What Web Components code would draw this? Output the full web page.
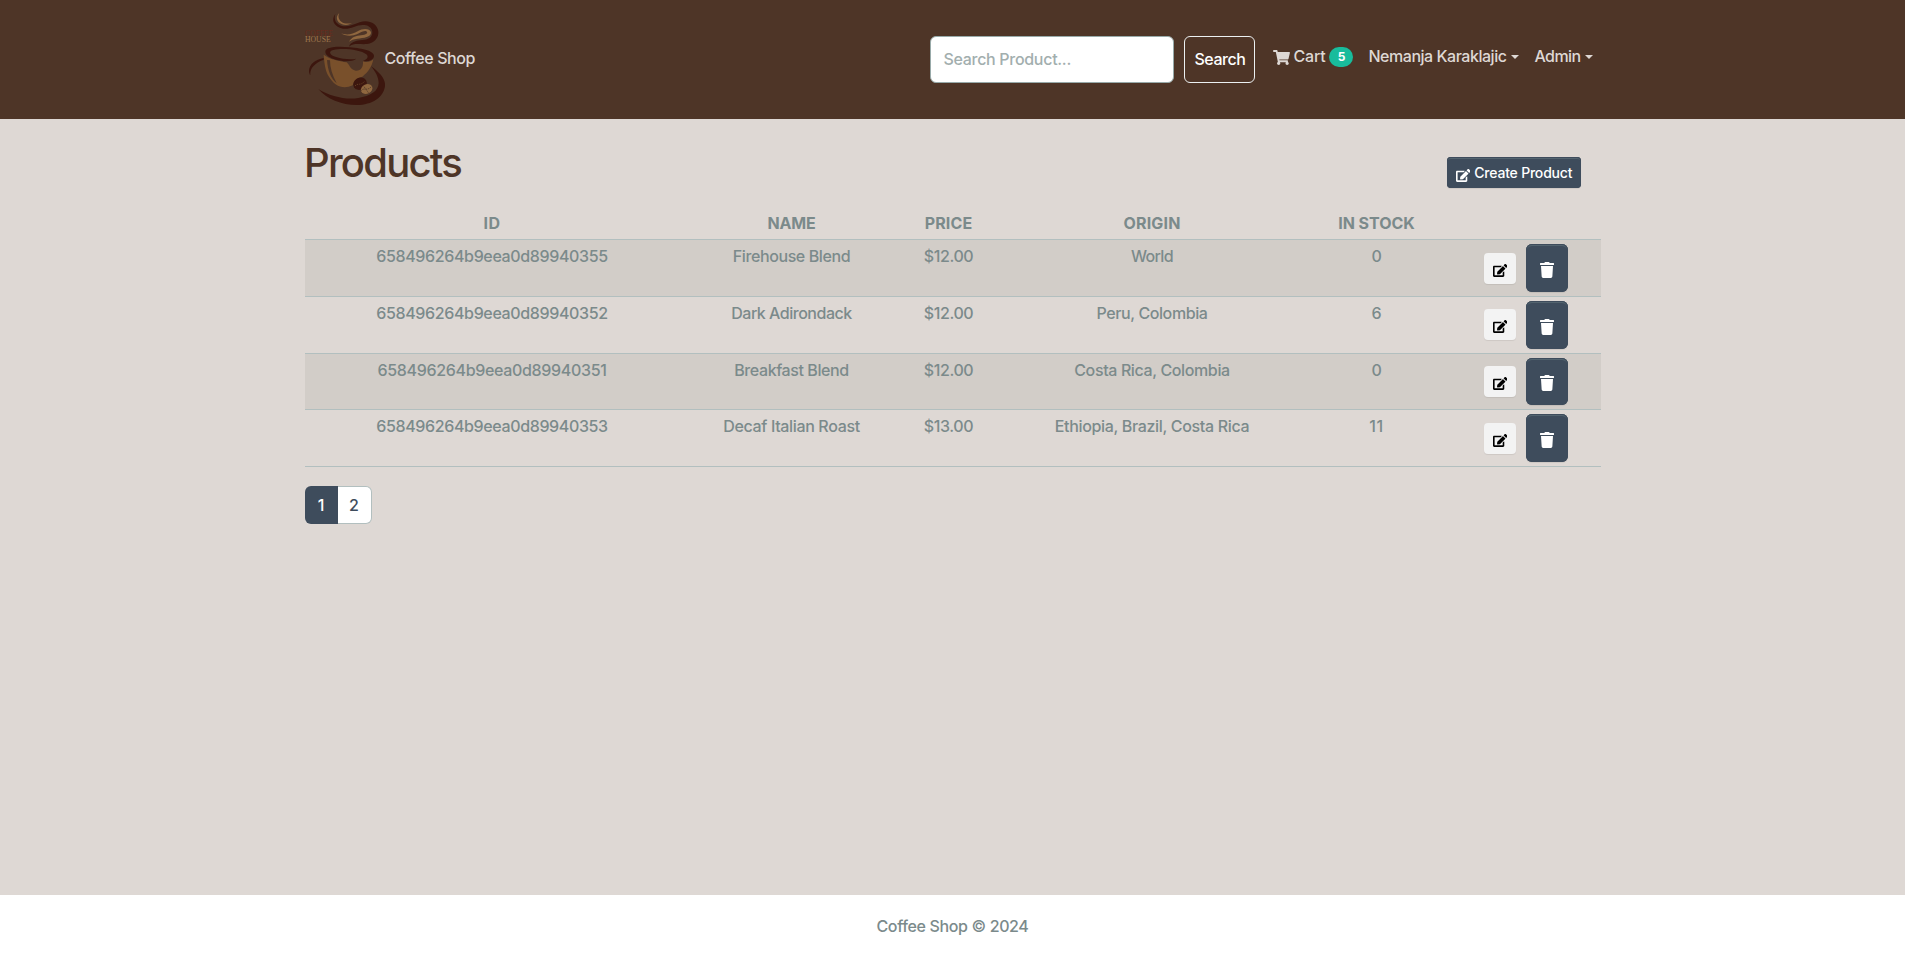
<!DOCTYPE html>
<html lang="en">
<head>
<meta charset="utf-8">
<title>Coffee Shop</title>
<style>
html,body{margin:0;height:100%}
body{font:450 16px/24px Inter,"Liberation Sans",sans-serif;color:#7b8a8b;background:#ded8d4}
</style>
</head>
<body>
<shop-app></shop-app>
<script>
const define=(name,html,init)=>customElements.define(name,class extends HTMLElement{
  constructor(){super();this.attachShadow({mode:'open'})}
  connectedCallback(){
    this.shadowRoot.innerHTML=typeof html==='function'?html(this):html;
    if(init)init(this);
  }
});

/* Text tracked so that its line takes a given width */
define('fit-text','<style>:host{display:inline-block;white-space:nowrap}</style><slot></slot>',el=>{
  const want=+el.getAttribute('w'),n=el.textContent.length;
  el.style.letterSpacing=((want-el.getBoundingClientRect().width)/n).toFixed(4)+'px';
});

const icons={
  cart:['0 0 576 512','M528.12 301.319l47.273-208C578.806 78.301 567.391 64 551.99 64H159.208l-9.166-44.81C147.758 8.021 137.93 0 126.529 0H24C10.745 0 0 10.745 0 24v16c0 13.255 10.745 24 24 24h69.883l70.248 343.435C147.325 417.1 136 435.222 136 456c0 30.928 25.072 56 56 56s56-25.072 56-56c0-15.674-6.447-29.835-16.824-40h209.647C430.447 426.165 424 440.326 424 456c0 30.928 25.072 56 56 56s56-25.072 56-56c0-22.172-12.888-41.332-31.579-50.405l5.517-24.276c3.413-15.018-8.002-29.319-23.403-29.319H218.117l-6.545-32h293.145c11.206 0 20.92-7.754 23.403-18.681z'],
  edit:['0 0 576 512','M402.6 83.2l90.2 90.2c3.8 3.8 3.8 10 0 13.8L274.4 405.6l-92.8 10.3c-12.4 1.4-22.9-9.1-21.5-21.5l10.3-92.8L388.8 83.2c3.8-3.8 10-3.8 13.8 0zm162-22.9l-48.8-48.8c-15.2-15.2-39.9-15.2-55.2 0l-35.4 35.4c-3.8 3.8-3.8 10 0 13.8l90.2 90.2c3.8 3.8 10 3.8 13.8 0l35.4-35.4c15.2-15.3 15.2-40 0-55.2zM384 346.2V448H64V128h229.8c3.2 0 6.2-1.3 8.5-3.5l40-40c7.6-7.6 2.2-20.5-8.5-20.5H48C21.5 64 0 85.5 0 112v352c0 26.5 21.5 48 48 48h352c26.5 0 48-21.5 48-48V306.2c0-10.7-12.9-16-20.5-8.5l-40 40c-2.2 2.3-3.5 5.3-3.5 8.5z'],
  trash:['0 0 448 512','M432 32H312l-9.4-18.7A24 24 0 0 0 281.1 0H166.8a23.72 23.72 0 0 0-21.4 13.3L136 32H16A16 16 0 0 0 0 48v32a16 16 0 0 0 16 16h416a16 16 0 0 0 16-16V48a16 16 0 0 0-16-16zM32 128H416L395 467a48 48 0 0 1-47.9 45H101.1a48 48 0 0 1-47.9-45z']
};
define('fa-icon',el=>{const [vb,d]=icons[el.getAttribute('name')];
  return `<style>:host{display:inline-block;flex:none}svg{display:block;width:100%;height:100%}</style><svg viewBox="${vb}" fill="currentColor"><path d="${d}"/></svg>`});

define('shop-logo',`<style>
:host{display:block;width:80px;height:100px}svg{display:block}text{font-family:"Liberation Serif",serif;font-weight:400;font-size:25px}</style>
<svg width="80" height="100" viewBox="30 30 240 300">
<text x="30" y="108" fill="#6a2a1c" textLength="84" lengthAdjust="spacingAndGlyphs">COFFEE</text>
<text x="30" y="127" fill="#a0784e" textLength="77" lengthAdjust="spacingAndGlyphs">HOUSE</text>
<path fill="#3c160e" d="M121 42C107 61 117 80 144 86C166 90 185 72 209 75C231 78 238 98 227 111C218 121 199 119 183 123C172 126 164 132 162 140C177 127 194 134 216 132C239 130 252 112 250 94C246 68 218 58 194 67C170 76 150 85 132 74C119 66 117 54 121 42Z"/>
<path fill="#8f673f" d="M133 39C120 51 125 66 141 73C154 78 165 73 171 70C158 71 148 72 139 65C129 57 129 47 133 39ZM138 99C153 107 173 103 188 94C204 84 224 85 228 97C230 111 205 115 187 116C176 117 168 120 162 125C171 111 184 107 198 106C213 105 221 99 214 94C207 89 191 102 176 106C161 109 146 106 138 99Z"/>
<path fill="#3c160e" d="M86 174C61 178 41 194 42 215C43 220 44 223 46 226C44 206 57 190 86 179ZM228 199C255 218 272 237 270 258C266 292 231 315 186 315C139 315 95 297 70 267C105 289 151 300 190 294C226 288 250 274 251 249C251 232 242 216 228 199Z"/>
<path fill="#79502b" d="M86 164C88 190 91 213 101 229C119 260 145 269 173 256C179 239 188 233 202 230C220 217 231 198 235 178C226 187 214 188 204 184C205 202 198 213 182 212C166 210 163 193 155 187C134 183 103 178 86 164Z"/>
<path fill="#4e3527" d="M96 180C98 211 107 235 125 250C112 225 105 203 105 181Z"/>
<path fill="#3c160e" fill-rule="evenodd" d="M91 155C90 141 126 138 164 142C205 145 239 154 237 169C235 181 219 186 203 183C215 180 223 171 214 163C198 149 142 143 115 150C98 154 105 166 123 171C144 178 169 179 184 176C169 187 143 184 123 179C104 174 91 165 91 155Z"/>
<ellipse cx="195" cy="251" rx="21" ry="18" fill="#3c160e" transform="rotate(-30 195 251)"/>
<path d="M180 258C189 247 194 260 210 243" fill="none" stroke="#76502f" stroke-width="2" stroke-dasharray="4 3"/>
<ellipse cx="215" cy="267" rx="18" ry="14" fill="#8f673f" transform="rotate(-25 215 267)"/>
<path d="M199 272C207 260 215 276 230 259M207 260L221 279" fill="none" stroke="#4e3527" stroke-width="2.2" stroke-dasharray="5 2"/>
</svg>`);

define('nav-link',el=>`<style>
:host{display:flex;align-items:center;color:#ded8d4;height:24px}
i{margin:1px 0 0 4px;border:4px solid transparent;border-top-color:currentColor;border-bottom:0}
</style><slot></slot>${el.hasAttribute('drop')?'<i></i>':''}`);

define('nav-badge',`<style>:host{display:flex;align-items:center;justify-content:center;width:24px;height:20px;border-radius:10px;background:#18bc9c;color:#fff;font-size:12px;font-weight:700;line-height:20px;margin:1px 0 0 4px}</style><slot></slot>`);

define('search-form',`<style>
:host{display:flex;gap:10px}
input,button{box-sizing:border-box;height:47px;border-radius:6px;font:inherit;margin:0}
input{width:244px;border:1px solid #98aaa9;background:#fff;padding:0 12px 1px;letter-spacing:-.3px}
input::placeholder{color:#a2aeae;opacity:1}
button{width:71px;border:1px solid #ecf0f1;background:none;color:#fff;padding:0 0 1px;font-weight:500}
</style><input placeholder="Search Product..."><button><fit-text w="51">Search</fit-text></button>`);

define('shop-header',`<style>
:host{display:flex;height:119px;background:#4e3527;justify-content:center}
.in{width:1296px;display:flex;align-items:flex-start}
.brand{display:flex;color:#ded8d4;margin-right:auto}
shop-logo{margin-top:10px}
.brand fit-text{margin:46px 0 0 0}
search-form{margin:36px 18px 0 0}
nav{display:flex;margin:44px 8px 0 0}
nav-link+nav-link{margin-left:15px}
nav-link:last-child{margin-left:16px}
fa-icon{width:17px;height:15px;margin-right:3px;margin-top:2px}
</style><div class="in"><div class="brand"><shop-logo></shop-logo><fit-text w="90.5">Coffee Shop</fit-text></div>
<search-form></search-form>
<nav><nav-link><fa-icon name="cart"></fa-icon><fit-text w="32">Cart</fit-text><nav-badge>5</nav-badge></nav-link>
<nav-link drop><fit-text w="138">Nemanja Karaklajic</fit-text></nav-link>
<nav-link drop><fit-text w="46">Admin</fit-text></nav-link></nav></div>`);

define('shop-button',`<style>
:host{display:inline-flex;box-sizing:border-box;align-items:center;justify-content:center;background:#3e4c5c;color:#fff;border-radius:6px;box-shadow:inset 0 0 0 1px #3e4c5c,inset 0 2px 0 #53646f,0 1px 1px rgba(0,0,0,.075)}
:host([kind=create]){width:134px;height:31px;border-radius:4px;font-size:14px;line-height:21px;font-weight:500}
:host([kind=edit]){width:32px;height:31px;border-radius:4px;background:#f3f3f3;color:#000;box-shadow:0 1px 1px rgba(0,0,0,.075)}
:host([kind=trash]){width:42px;height:48px}
</style><slot></slot>`);

define('product-row',el=>{
  const d=el.getAttribute('data').split('|').map(s=>s.split('~'));
  const head=el.hasAttribute('head');
  return `<style>
:host{display:grid;grid-template-columns:375px 224px 90px 317px 132px 158px;box-sizing:border-box;height:${el.getAttribute('h')}px;border-bottom:1px solid #b2bfbf;text-align:center;${head?'font-weight:700':''}}
:host([striped]){background:#d2cdc8}
.c{padding-top:${head?0:4}px}
.a{display:flex;padding-top:4px;padding-left:41px;gap:10px;align-items:flex-start}
shop-button[kind=edit]{margin-top:9px}
:host([tight]) shop-button[kind=edit]{margin-top:8px}
shop-button[kind=edit] fa-icon{width:14.5px;height:13px;margin-top:3px;margin-left:1px}
shop-button[kind=trash] fa-icon{width:14px;height:16px;margin-top:4px}
:host([h="56"]) shop-button[kind=trash]{height:47px}
:host([h="56"]) shop-button[kind=trash] fa-icon{margin-top:3px}
</style>`+d.map(([t,w])=>`<div class="c"><fit-text w="${w}">${t}</fit-text></div>`).join('')+
  (head?'':'<div class="a"><shop-button kind="edit"><fa-icon name="edit"></fa-icon></shop-button><shop-button kind="trash"><fa-icon name="trash"></fa-icon></shop-button></div>');
});

define('page-links',`<style>
:host{display:flex;width:67px;height:38px;box-sizing:border-box;color:#3e4c5c}
b{font-weight:450;box-sizing:border-box;display:flex;align-items:center;justify-content:center}
.on{width:33px;background:#3e4c5c;color:#fff;border-radius:6px 0 0 6px}
.off{width:34px;background:#fff;border:1px solid #b2bfbf;border-left:0;border-radius:0 6px 6px 0}
</style><b class="on">1</b><b class="off">2</b>`);

define('shop-app',`<style>
:host{display:flex;flex-direction:column;height:100vh}
main{width:1296px;margin:0 auto;flex:1}
.top{display:flex;justify-content:space-between;height:92px}
h1{font-size:40px;line-height:48px;font-weight:500;color:#4e3527;margin:20px 0 0 -.5px}
.top shop-button{margin:38px 20px 0 0}
.top fa-icon{width:14.5px;height:13px;margin:5px 4px 0 1px}
page-links{margin-top:19px}
footer{height:78px;background:#fff;text-align:center;box-sizing:border-box;padding-top:19px}
</style>
<shop-header></shop-header>
<main><div class="top"><h1><fit-text w="157">Products</fit-text></h1>
<shop-button kind="create"><fa-icon name="edit"></fa-icon><fit-text w="98">Create Product</fit-text></shop-button></div>
<product-row head h="29" data="ID~17|NAME~48|PRICE~47.5|ORIGIN~57|IN STOCK~76.5"></product-row>
<product-row striped h="57" data="658496264b9eea0d89940355~231.5|Firehouse Blend~117.5|$12.00~49.5|World~42|0~10"></product-row>
<product-row tight h="57" data="658496264b9eea0d89940352~231.5|Dark Adirondack~120.5|$12.00~49.5|Peru, Colombia~111|6~10"></product-row>
<product-row tight striped h="56" data="658496264b9eea0d89940351~229|Breakfast Blend~114.5|$12.00~49.5|Costa Rica, Colombia~155.5|0~10"></product-row>
<product-row h="57" data="658496264b9eea0d89940353~231.5|Decaf Italian Roast~136.5|$13.00~49.5|Ethiopia, Brazil, Costa Rica~194.5|11~14.5"></product-row>
<page-links></page-links></main>
<footer><fit-text w="152">Coffee Shop © 2024</fit-text></footer>`);
</script>
</body>
</html>
